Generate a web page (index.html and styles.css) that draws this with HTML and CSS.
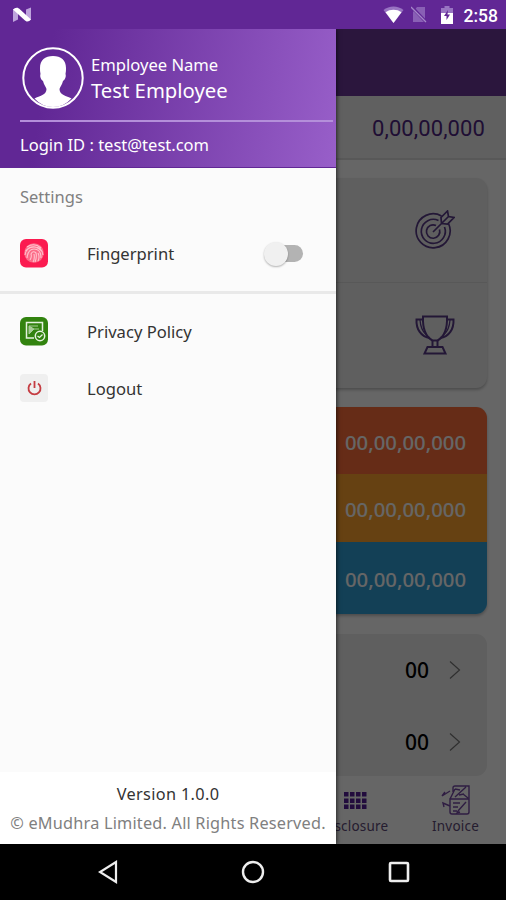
FILE: index.html
```
<!DOCTYPE html>
<html lang="en">
<head>
    <meta charset="UTF-8">
    <meta name="viewport" content="width=device-width, initial-scale=1.0">
    <title>Employee Menu</title>
    <link rel="stylesheet" href="styles.css">
</head>
<body>
    <div class="phone">
        <div class="status-bar">
            <svg class="n-logo" width="19" height="15" viewBox="0 0 19 15">
                <path d="M0 2.500L5 .5v12L0 15zM13 2.500L18 .5v12l-5 2z" fill="#bda3dc"/>
                <path d="M0 2.500Q3-.5 6 1.500L18 12.500Q15 16 12 13.500z" fill="#fff"/>
            </svg>
            <div class="status-icons">
                <svg class="wifi" width="21" height="17" viewBox="0 0 21 17">
                    <path d="M.5 4C6-.8 15-.8 20.500 4L10.500 17z" fill="#9874c2"/>
                    <path d="M2.500 6.300C7 3 14 3 18.500 6.300L10.500 17z" fill="#fff"/>
                </svg>
                <svg class="no-sim" width="16" height="17" viewBox="0 0 16 17">
                    <path d="M6 1h8v15H2V6z" fill="#8960b5"/>
                    <path d="M1 1l14 15" stroke="#612795" stroke-width="3"/>
                    <path d="M0 1l15 15" stroke="#a487c8" stroke-width="1.300"/>
                </svg>
                <svg class="battery" width="12" height="18" viewBox="0 0 12 18">
                    <path d="M3.500 0h5v2H12v6H0V2h3.500z" fill="#9874c2"/>
                    <path d="M0 7h12v11H0z" fill="#fff"/>
                    <path d="M7 4L3 10h2.500v4L9 8.500H6.500z" fill="#612795"/>
                </svg>
                <span class="clock">2:58</span>
            </div>
        </div>

        <div class="screen">
            <div class="home">
                <div class="app-bar"></div>
                <div class="total">0,00,00,000</div>
                <div class="card goals">
                    <div class="goal">
                        <svg width="40" height="40" viewBox="0 0 40 40" fill="none" stroke="#583a88" stroke-width="1.700">
                            <path d="M26.500 6A17 17 0 1 0 33.500 13.500"/>
                            <path d="M23.500 10.500A12 12 0 1 0 29.500 17"/>
                            <path d="M21 15.500A6.700 6.700 0 1 0 24.500 19.500"/>
                            <path d="M18 22L33.500 6.500M26.500 13.500l-.5-6L32.500 1l1 5.500 5.500 1-6.500 6.500z"/>
                        </svg>
                    </div>
                    <div class="goal">
                        <svg width="40" height="40" viewBox="0 0 40 40" fill="none" stroke="#583a88" stroke-width="2">
                            <path d="M7 1.500h26M8 1.500C7.500 14 11 22 17.500 25.500h5C29 22 32.500 14 32 1.500"/>
                            <path d="M8 4.500H1.500C1 14 6 22 15 23M32 4.500h6.500C39 14 34 22 25 23"/>
                            <path d="M5 5c.5 7 2 11 6 14.500M35 5c-.5 7-2 11-6 14.500" stroke-width="1.300"/>
                            <path d="M17.500 25.500v6M22.500 25.500v6M12.500 32h15l3 6.500h-21z"/>
                        </svg>
                    </div>
                </div>
                <div class="card amounts">
                    <div class="amount orange">00,00,00,000</div>
                    <div class="amount yellow">00,00,00,000</div>
                    <div class="amount blue">00,00,00,000</div>
                </div>
                <div class="card counts">
                    <div class="count">
                        <span>00</span>
                        <svg width="12" height="20" viewBox="0 0 12 20"><path d="M1 1.500L10.500 10 1 18.500" fill="none" stroke="#777" stroke-width="1.200"/></svg>
                    </div>
                    <div class="count">
                        <span>00</span>
                        <svg width="12" height="20" viewBox="0 0 12 20"><path d="M1 1.500L10.500 10 1 18.500" fill="none" stroke="#777" stroke-width="1.200"/></svg>
                    </div>
                </div>
                <div class="tabs">
                    <div class="tab">
                        <svg width="24" height="30" viewBox="0 0 24 30">
                            <path d="M1 7h4.500v4.500H1zM7 7h4.500v4.500H7zM13 7h4.500v4.500H13zM19 7h4.500v4.500H19zM1 13.500h4.500V18H1zM7 13.500h4.500V18H7zM13 13.500h4.500V18H13zM19 13.500h4.500V18H19zM1 19.500h4.500V24H1zM7 19.500h4.500V24H7zM13 19.500h4.500V24H13zM19 19.500h4.500V24H19z" fill="#55209a"/>
                        </svg>
                        <span>Disclosure</span>
                    </div>
                    <div class="tab">
                        <svg width="30" height="30" viewBox="0 0 30 30" fill="none" stroke="#7549a5" stroke-width="1.400">
                            <path d="M12 7V3q0-2 2-2h14v17M9 14V27q0 2 2 2h15q2 0 2-2V14zM9 14l5-10M14 12L25 2M14 4l5 1M22 9l5 4M18 10l5-1"/>
                            <path d="M12 18h7M12 22h5M12 26h4M17 26l8-9M17 26l-1 2 3-1M1 11l8-5M1 11l3-4M9 21l-7-3 1 4"/>
                        </svg>
                        <span>Invoice</span>
                    </div>
                </div>
            </div>
            <div class="scrim"></div>

            <div class="drawer">
                <div class="profile">
                    <div class="user">
                        <svg class="avatar" width="62" height="62" viewBox="0 0 62 62">
                            <circle cx="31" cy="31" r="29.700" fill="none" stroke="#fff" stroke-width="2"/>
                            <path d="M31 9c8 0 13 4 13 12 0 2 0 4-.5 6 1 3-1 6-2.500 7-1 4-3 6-3.500 8 0 6 7 7 12 9.500Q42 60 31 60T12.500 51.500C17.500 49 24.500 48 24.500 42c-.5-2-2.500-4-3.500-8-1.500-1-3.500-4-2.500-7-.5-2-.5-4-.5-6C18 13 23 9 31 9z" fill="#fff"/>
                        </svg>
                        <div class="names">
                            <div class="label">Employee Name</div>
                            <div class="name">Test Employee</div>
                        </div>
                    </div>
                    <div class="login">Login ID : test@test.com</div>
                </div>

                <div class="section">
                    <div class="section-title">Settings</div>
                    <div class="item fingerprint">
                        <svg width="28" height="29" viewBox="0 0 28 29">
                            <rect width="28" height="28.500" rx="6" fill="#fb1b50"/>
                            <circle cx="14" cy="14" r="9.800" fill="#fc6c88"/>
                            <g fill="none" stroke="#ffc3ce" stroke-width="1.100">
                                <path d="M7 8q7-5 14 1M5.500 12q8-9 17 1M5 16q1-8 9-8 8 0 9 8M7 19q1-9 7-9 7 0 7 9M10 21q2-3 1-6 2-4 5-1 1 4-1 9M13 23q2-3 1-8M18 22q2-4 0-8"/>
                            </g>
                        </svg>
                        <span>Fingerprint</span>
                        <div class="switch"><div class="knob"></div></div>
                    </div>
                </div>

                <div class="section links">
                    <div class="item">
                        <svg width="28" height="29" viewBox="0 0 28 29">
                            <rect width="28" height="28.500" rx="6" fill="#32830f"/>
                            <path d="M14 21H6.500V5.500h16V14" fill="none" stroke="#e5f2df" stroke-width="1.500"/>
                            <path d="M9 9l5 3-5 5zM9 9h9M14 12h5" fill="#a6cc96" stroke="#a6cc96"/>
                            <circle cx="20" cy="19" r="4.700" fill="#32830f" stroke="#e5f2df" stroke-width="1.500"/>
                            <path d="M17.500 19l2 1.500 3-3" fill="none" stroke="#e5f2df" stroke-width="1.300"/>
                        </svg>
                        <span>Privacy Policy</span>
                    </div>
                    <div class="item">
                        <svg width="28" height="29" viewBox="0 0 28 29">
                            <rect width="28" height="28" rx="4" fill="#efefef"/>
                            <path d="M11 9.500a6 6 0 1 0 7 0M14.500 7v7" fill="none" stroke="#c53c42" stroke-width="1.800"/>
                        </svg>
                        <span>Logout</span>
                    </div>
                </div>

                <div class="about">
                    <div class="version">Version 1.0.0</div>
                    <div class="copyright">© eMudhra Limited. All Rights Reserved.</div>
                </div>
            </div>
        </div>

        <div class="nav-bar">
            <svg width="20" height="24" viewBox="0 0 20 24"><path d="M18 2v20L2 12z" fill="none" stroke="#eee" stroke-width="2.200"/></svg>
            <svg width="24" height="24" viewBox="0 0 24 24"><circle cx="12" cy="12" r="10" fill="none" stroke="#eee" stroke-width="2.400"/></svg>
            <svg width="22" height="22" viewBox="0 0 22 22"><rect x="2" y="2" width="18" height="18" rx="1" fill="none" stroke="#eee" stroke-width="2.600"/></svg>
        </div>
    </div>
</body>
</html>
```

FILE: styles.css
```
* {
    box-sizing: border-box;
}
body {
    margin: 0;
    font-family: "Noto Sans", "Open Sans", sans-serif;
    color: #333;
}
svg {
    display: block;
    flex-shrink: 0;
}
.phone {
    width: 506px;
    height: 900px;
    display: flex;
    flex-direction: column;
    overflow: hidden;
}
.status-bar {
    height: 29px;
    flex-shrink: 0;
    display: flex;
    justify-content: space-between;
    padding: 6px 8px 0 13px;
    background-color: #612795;
}
.n-logo {
    margin-top: 1px;
}
.status-icons {
    display: flex;
    align-items: flex-start;
}
.no-sim {
    margin-left: 7px;
}
.battery {
    margin-left: 14px;
}
.clock {
    margin-left: 11px;
    font: 500 17.5px/20px Roboto, sans-serif;
    color: #fff;
}
.screen {
    position: relative;
    height: 815px;
}
.home {
    height: 100%;
    background-color: #fff;
}
.app-bar {
    height: 67px;
    background-color: #6c3799;
}
.total {
    height: 64px;
    padding-right: 21px;
    border-bottom: 2px solid #dcdcdc;
    background-color: #f0f0f0;
    font: 400 22px/65px Roboto, sans-serif;
    letter-spacing: 0.1px;
    text-align: right;
    color: #4e2582;
}
.card {
    width: 468px;
    margin: 18px 19px 0;
    border-radius: 11px;
    background-color: #ededed;
    box-shadow: 0 2px 3px rgba(0, 0, 0, 0.25);
    overflow: hidden;
}
.goals {
    height: 210px;
}
.goal {
    height: 104px;
    display: flex;
    align-items: center;
    justify-content: flex-end;
    padding-right: 32px;
}
.goal + .goal {
    border-top: 1px solid #ddd;
}
.amounts {
    height: 207px;
    margin-top: 19px;
}
.amount {
    height: 67px;
    padding-right: 21px;
    font-size: 20.3px;
    font-weight: 500;
    line-height: 70px;
    text-align: right;
    color: #fff;
}
.orange {
    background-color: #ff6e3a;
}
.yellow {
    height: 68px;
    background-color: #ffa42d;
}
.blue {
    height: 72px;
    line-height: 74px;
    background-color: #30a0d8;
}
.counts {
    height: 142px;
    margin-top: 20px;
    box-shadow: none;
}
.count {
    height: 72px;
    display: flex;
    align-items: center;
    justify-content: flex-end;
    gap: 20px;
    padding-right: 26px;
    font-size: 21px;
    font-weight: 500;
    color: #000;
}
.tabs {
    display: flex;
    justify-content: flex-end;
    padding-top: 9px;
}
.tab {
    width: 101px;
    display: flex;
    flex-direction: column;
    align-items: center;
    font-size: 13.5px;
    line-height: 20px;
    letter-spacing: 0.2px;
    color: #5d4a78;
}
.tab span {
    margin-top: 1px;
}
.scrim {
    position: absolute;
    inset: 0;
    background-color: rgba(0, 0, 0, 0.6);
}
.drawer {
    position: absolute;
    top: 0;
    left: 0;
    width: 336px;
    height: 100%;
    display: flex;
    flex-direction: column;
    background-color: #fbfbfb;
    box-shadow: 1px 0 4px rgba(0, 0, 0, 0.6);
    clip-path: inset(0 -8px 0 0);
}
.profile {
    height: 139px;
    padding-left: 20px;
    padding-right: 3px;
    background: linear-gradient(100deg, #612795 15%, #985fc9);
    border-bottom: 1px solid #612795;
    color: #fff;
}
.user {
    height: 93px;
    display: flex;
    padding: 18px 0 0 2px;
    border-bottom: 2px solid #b48fda;
}
.names {
    margin-left: 7px;
    padding-top: 6px;
}
.label {
    font-size: 16.6px;
    line-height: 24px;
}
.name {
    font-size: 20.3px;
    line-height: 27px;
}
.login {
    font-size: 16.5px;
    line-height: 46px;
}
.section {
    height: 126px;
    border-bottom: 3px solid #e9e9e9;
}
.section-title {
    padding: 15px 20px 0;
    font-size: 16.5px;
    line-height: 28px;
    color: #808080;
}
.item {
    height: 57px;
    display: flex;
    align-items: center;
    padding: 0 33px 0 20px;
    font-size: 16.6px;
}
.item span {
    margin-left: 39px;
}
.fingerprint {
    margin-top: 14px;
}
.switch {
    width: 38px;
    height: 17px;
    display: flex;
    align-items: center;
    margin-left: auto;
    border-radius: 9px;
    background-color: #b3b3b3;
}
.knob {
    width: 24px;
    height: 24px;
    margin-left: -1px;
    border-radius: 50%;
    background-color: #f0f0f0;
    box-shadow: 0 1px 2px rgba(0, 0, 0, 0.3);
}
.links {
    height: auto;
    padding-top: 9px;
    border-bottom: none;
}
.about {
    height: 72px;
    margin-top: auto;
    padding-top: 8px;
    background-color: #fff;
    text-align: center;
    line-height: 29px;
}
.version {
    font-size: 16.3px;
    letter-spacing: 0.35px;
}
.copyright {
    font-size: 16.3px;
    letter-spacing: 0.2px;
    white-space: nowrap;
    color: #808080;
}
.nav-bar {
    height: 56px;
    display: flex;
    align-items: center;
    padding-left: 98px;
    background-color: #000;
}
.nav-bar svg + svg {
    margin-left: 123px;
}
```
